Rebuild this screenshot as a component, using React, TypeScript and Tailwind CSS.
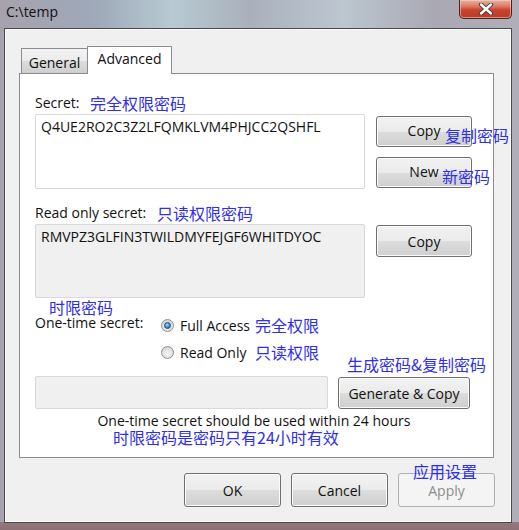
import React from "react";

const sans = "font-[family-name:'Open_Sans',sans-serif]";
const cjk = "font-[family-name:'Noto_Sans_CJK_SC',sans-serif] text-[#2e2eee] text-[16px] leading-[20px]";
const cjkTight = "font-[family-name:'Noto_Sans_CJK_SC',sans-serif] text-[#2e2eee] text-[16px] leading-[16px]";

function Btn({
  children,
  className = "",
  disabled = false,
}: {
  children: React.ReactNode;
  className?: string;
  disabled?: boolean;
}) {
  return (
    <div
      className={`flex items-center justify-center rounded-[3px] border text-[14px] ${
        disabled
          ? "border-[#adb2b5] bg-[#f4f4f4] text-[#8d8d8d]"
          : "border-[#707070] bg-[linear-gradient(180deg,#f2f2f2_0%,#ebebeb_50%,#dddddd_50%,#cfcfcf_100%)] text-[#111] shadow-[inset_0_0_0_1px_#fbfbfb]"
      } ${className}`}
    >
      {children}
    </div>
  );
}

function Radio({ checked }: { checked?: boolean }) {
  return (
    <div className="flex h-[13px] w-[13px] items-center justify-center rounded-full border border-[#8e8f8f] bg-[radial-gradient(circle_at_50%_60%,#f6f6f6_0%,#dedede_60%,#c4c4c4_100%)]">
      {checked && (
        <div className="h-[7px] w-[7px] rounded-full border border-[#1b4a75] bg-[radial-gradient(circle_at_40%_35%,#9fdcfb_0%,#3d8fd0_55%,#1e5c9c_100%)]" />
      )}
    </div>
  );
}

export default function App() {
  return (
    <div
      className={`relative h-[530px] w-[519px] overflow-hidden ${sans} bg-[linear-gradient(180deg,rgba(0,0,0,0)_0%,rgba(0,0,0,0)_98.4%,#95767c_98.4%,#8d7176_100%),linear-gradient(90deg,#a7a2ad_0%,#9ea8b8_18%,#b7c9d2_33%,#a9b0bc_48%,#bcc6cf_66%,#a9a8b3_84%,#b0aeb8_100%)]`}
    >
      {/* Title */}
      <div className="flex h-[28px] items-start pl-[6px] pt-[3px] text-[14px] leading-[18px] text-[#111]">
        {"C:\\temp"}
      </div>

      {/* Close button */}
      <div className="absolute left-[459px] top-0 flex h-[19px] w-[53px] items-center justify-center rounded-b-[5px] border border-t-0 border-[#4e231d] bg-[linear-gradient(180deg,#e9b2a4_0%,#d87a66_35%,#c8432e_55%,#bb3b27_100%)] shadow-[inset_0_0_0_1px_rgba(255,220,210,0.5)]">
        <svg width="16" height="12" viewBox="0 0 16 12">
          <path d="M3 1.5 L13 10.5 M13 1.5 L3 10.5" stroke="#3a3a3a" strokeWidth="4.2" strokeLinecap="round" />
          <path d="M3 1.5 L13 10.5 M13 1.5 L3 10.5" stroke="#ffffff" strokeWidth="2.4" strokeLinecap="round" />
        </svg>
      </div>

      {/* Client area */}
      <div className="ml-[4px] flex h-[495px] w-[508px] flex-col border border-[#4a4a4a] bg-[#f0f0f0] pl-[14px] shadow-[inset_0_0_0_1px_#fafafa]">
        {/* Tabs */}
        <div className="mt-[17px] flex h-[28px] items-end pl-[2px]">
          <div className="mb-[1px] flex h-[25px] w-[66px] items-center justify-center border border-b-0 border-r-0 border-[#898c95] bg-[linear-gradient(180deg,#f3f3f3_0%,#ebebeb_50%,#dddddd_50%,#cfcfcf_100%)] pt-[2px] text-[14px] text-[#111]">
            General
          </div>
          <div className="relative z-10 flex h-[28px] w-[85px] items-start justify-center border border-b-0 border-[#898c95] bg-white pt-[2px] text-[14px] leading-[20px] text-[#111]">
            Advanced
          </div>
        </div>

        {/* Panel */}
        <div className="relative -mt-px h-[385px] w-[475px] border border-[#898c95] bg-white pl-[15px] pt-[21px] text-[14px] text-[#111]">
          {/* Secret */}
          <div className="flex h-[16px] items-center leading-[16px]">
            <span className="w-[55px]">Secret:</span>
            <span className={cjkTight}>完全权限密码</span>
          </div>
          <div className="mt-[3px] flex">
            <div className="h-[75px] w-[330px] rounded-[2px] border border-[#d8d8d8] pl-[5px] pt-[4px] leading-[16px]">
              Q4UE2RO2C3Z2LFQMKLVM4PHJCC2QSHFL
            </div>
            <div className="ml-[11px] flex flex-col gap-[10px] pt-[2px]">
              <div className="relative">
                <Btn className="h-[31px] w-[96px] pb-[2px]">Copy</Btn>
                <span className={`absolute left-[69px] top-[11px] whitespace-nowrap ${cjkTight}`}>复制密码</span>
              </div>
              <div className="relative">
                <Btn className="h-[31px] w-[96px] pb-[2px]">New</Btn>
                <span className={`absolute left-[66px] top-[11px] whitespace-nowrap ${cjkTight}`}>新密码</span>
              </div>
            </div>
          </div>

          {/* Read only secret */}
          <div className="mt-[16px] flex h-[16px] items-center leading-[16px]">
            <span className="w-[122px]">Read only secret:</span>
            <span className={cjkTight}>只读权限密码</span>
          </div>
          <div className="mt-[3px] flex">
            <div className="h-[74px] w-[330px] rounded-[2px] border border-[#d8d8d8] bg-[#f0f0f0] pl-[5px] pt-[4px] leading-[16px]">
              RMVPZ3GLFIN3TWILDMYFEJGF6WHITDYOC
            </div>
            <div className="ml-[11px] pt-[1px]">
              <Btn className="h-[32px] w-[96px]">Copy</Btn>
            </div>
          </div>

          {/* One-time */}
          <div className="mt-[1px] flex h-[16px] items-start pl-[14px]">
            <span className={cjkTight}>时限密码</span>
          </div>
          <div className="flex">
            <div className="h-[16px] w-[126px] leading-[16px]">One-time secret:</div>
            <div className="mt-[1px] flex flex-col gap-[9px]">
              <div className="flex h-[18px] items-center">
                <Radio checked />
                <span className="ml-[6px] w-[75px]">Full Access</span>
                <span className={cjkTight}>完全权限</span>
              </div>
              <div className="flex h-[18px] items-center">
                <Radio />
                <span className="ml-[6px] w-[75px]">Read Only</span>
                <span className={cjkTight}>只读权限</span>
              </div>
            </div>
          </div>

          <span className={`absolute left-[327px] top-[282px] whitespace-nowrap ${cjkTight}`}>生成密码&amp;复制密码</span>

          <div className="mt-[15px] flex items-start">
            <div className="h-[33px] w-[293px] rounded-[2px] border border-[#d8d8d8] bg-[#f0f0f0]" />
            <div className="ml-[10px] mt-[1px]">
              <Btn className="h-[32px] w-[132px]">Generate &amp; Copy</Btn>
            </div>
          </div>

          <div className="mt-[4px] h-[16px] w-[438px] text-center leading-[16px]">
            One-time secret should be used within 24 hours
          </div>
          <div className="ml-[78px] flex h-[16px] items-center">
            <span className={cjkTight}>时限密码是密码只有24小时有效</span>
          </div>
        </div>

        {/* Bottom buttons */}
        <div className="mt-[15px] flex gap-[10px] pl-[165px]">
          <Btn className="h-[34px] w-[97px]">OK</Btn>
          <Btn className="h-[34px] w-[97px]">Cancel</Btn>
          <div className="relative">
            <Btn disabled className="h-[34px] w-[97px]">
              Apply
            </Btn>
            <span className={`absolute left-[15px] top-[-10px] whitespace-nowrap ${cjkTight}`}>应用设置</span>
          </div>
        </div>
      </div>
    </div>
  );
}
